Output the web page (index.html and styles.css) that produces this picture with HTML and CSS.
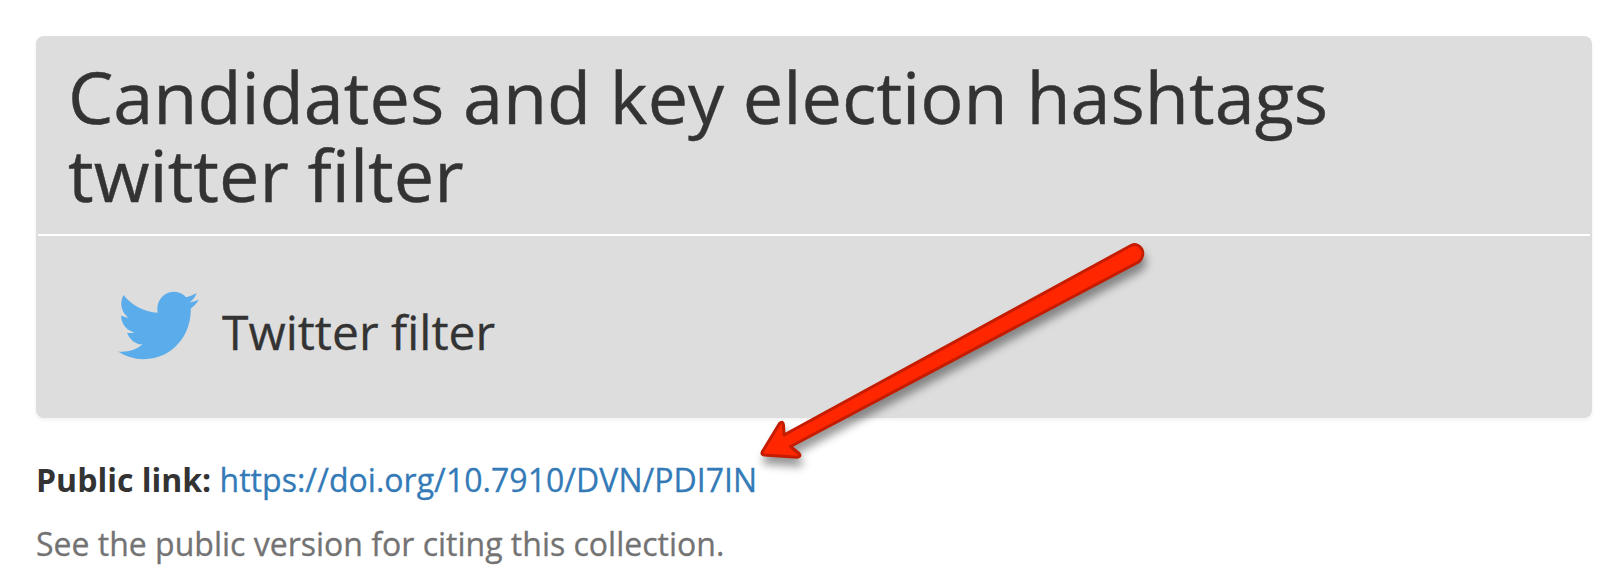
FILE: index.html
```html
<!DOCTYPE html>
<html lang="en">
<head>
<meta charset="utf-8">
<title>Candidates and key election hashtags twitter filter</title>
<link rel="stylesheet" href="styles.css">
</head>
<body>
<main class="page">
<section class="panel">
<h1 class="title">Candidates and key election hashtags<br>twitter filter</h1>
<div class="source">
<svg class="bird" viewBox="0 0 24 24" preserveAspectRatio="none"><path d="M23.953 4.57a10 10 0 01-2.825.775 4.958 4.958 0 002.163-2.723c-.951.555-2.005.959-3.127 1.184a4.92 4.92 0 00-8.384 4.482C7.69 8.095 4.067 6.13 1.64 3.162a4.822 4.822 0 00-.666 2.475c0 1.71.87 3.213 2.188 4.096a4.904 4.904 0 01-2.228-.616v.06a4.923 4.923 0 003.946 4.827 4.996 4.996 0 01-2.212.085 4.936 4.936 0 004.604 3.417 9.867 9.867 0 01-6.102 2.105c-.39 0-.779-.023-1.17-.067a13.995 13.995 0 007.557 2.209c9.053 0 13.998-7.496 13.998-13.985 0-.21 0-.42-.015-.63A9.935 9.935 0 0024 4.59z"/></svg>
<h2 class="kind">Twitter filter</h2>
</div>
</section>
<p class="link"><b>Public link:</b> <a class="doi" href="#">https://doi.org/10.7910/DVN/PDI7IN</a></p>
<p class="note">See the public version for citing this collection.</p>
</main>
<svg class="arrow" viewBox="0 0 1624 582"><path d="M762.5 451.5L779.5 423.5Q783 420.500 783.500 425L784 435L1131 245.500C1140 241 1148 254 1138.500 262L790.500 446.500L799 453.500Q801.500 456.500 797 457.200L764 455Q761 454.500 762.500 451.500Z"/></svg>
</body>
</html>
```
FILE: styles.css
```css
body { margin: 0; background: #fff; color: #333; font-family: "Open Sans", sans-serif; }
.page { padding: 36px 32px 0 36px; }
.panel { height: 382px; border-radius: 8px; background: #ddd; box-shadow: 0 2px 4px rgba(0,0,0,.06); box-sizing: border-box; padding: 0 2px; }
.title { margin: 0; height: 200px; box-sizing: border-box; padding: 21px 30px 0; border-bottom: 2px solid #fff; font-size: 72px; line-height: 78px; font-weight: 400; white-space: nowrap; -webkit-text-stroke: .4px #333; }
.source { display: flex; padding: 48px 0 0 80px; }
.bird { width: 81px; height: 83px; fill: #5aaceb; }
.kind { margin: 15px 0 0 23px; font-size: 48px; line-height: 66px; font-weight: 400; -webkit-text-stroke: .3px #333; }
.link, .note { margin: 0; font-size: 32px; line-height: 46px; white-space: nowrap; }
.link { margin-top: 39px; }
.note { margin-top: 18px; color: #737373; -webkit-text-stroke: .3px #737373; }
.doi { color: #337ab7; text-decoration: none; letter-spacing: .03px; -webkit-text-stroke: .3px #337ab7; }
.arrow { position: absolute; left: 0; top: 0; width: 1624px; height: 582px; fill: #ff2600; stroke: #c51c00; stroke-width: 3; stroke-linejoin: round; filter: drop-shadow(2px 8px 4px rgba(0,0,0,.4)); pointer-events: none; }
```
